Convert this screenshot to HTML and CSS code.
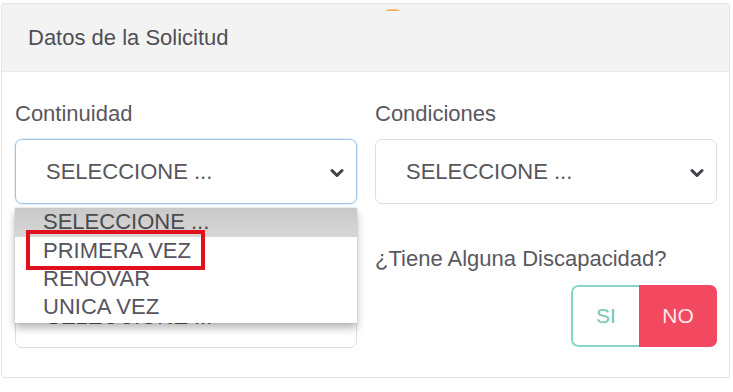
FILE: index.html
```html
<!DOCTYPE html>
<html lang="es">
<head>
<meta charset="utf-8">
<title>Datos de la Solicitud</title>
<link rel="stylesheet" href="styles.css">
</head>
<body>
<div class="page">
  <span class="orange-mark"></span>
  <section class="card">
    <header class="card-header">Datos de la Solicitud</header>
    <div class="card-body">
      <div class="field">
        <label class="label">Continuidad</label>
        <div class="select focused">
          <span>SELECCIONE ...</span>
          <svg class="chev" width="14" height="10" viewBox="0 0 14 10"><path d="M2 2.5 L7 7.5 L12 2.5" fill="none" stroke="#3f3f46" stroke-width="3" stroke-linecap="round" stroke-linejoin="round"/></svg>
        </div>
        <ul class="dropdown">
          <li class="opt active">SELECCIONE ...</li>
          <li class="opt">PRIMERA VEZ</li>
          <li class="opt">RENOVAR</li>
          <li class="opt">UNICA VEZ</li>
          <span class="highlight"></span>
        </ul>
      </div>
      <div class="field">
        <label class="label">Condiciones</label>
        <div class="select">
          <span>SELECCIONE ...</span>
          <svg class="chev" width="14" height="10" viewBox="0 0 14 10"><path d="M2 2.5 L7 7.5 L12 2.5" fill="none" stroke="#3f3f46" stroke-width="3" stroke-linecap="round" stroke-linejoin="round"/></svg>
        </div>
      </div>
      <div class="field">
        <span class="label blank"></span>
        <div class="select under">
          <span class="under-text">SELECCIONE ...</span>
        </div>
      </div>
      <div class="field">
        <label class="label">¿Tiene Alguna Discapacidad?</label>
        <div class="toggle-row">
          <div class="toggle">
            <span class="tg si">SI</span>
            <span class="tg no">NO</span>
          </div>
        </div>
      </div>
    </div>
  </section>
</div>
</body>
</html>
```

FILE: styles.css
```css
* { box-sizing: border-box; }
html, body { margin: 0; padding: 0; background: #fff; }
body {
  font-family: "Liberation Sans", Arial, sans-serif;
  font-size: 22px;
  color: #555;
}
.page {
  position: relative;
  width: 733px;
  height: 392px;
  padding: 3px 3px 0 1px;
}
.orange-mark {
  position: absolute;
  left: 386px;
  top: 9px;
  width: 14px;
  height: 4px;
  border-radius: 50% 50% 0 0;
  border-top: 2px solid #f2b35a;
}
.card {
  width: 729px;
  height: 375px;
  border: 1px solid #e4e4e4;
  border-radius: 3px;
  background: #fff;
  overflow: hidden;
}
.card-header {
  height: 68px;
  background: #f3f3f3;
  border-bottom: 1px solid #e9e9e9;
  padding: 19px 0 0 26px;
  line-height: 30px;
  color: #4f4f55;
}
.card-body {
  display: grid;
  grid-template-columns: 342px 342px;
  column-gap: 18px;
  row-gap: 38px;
  padding: 25px 13px 0 13px;
}
.field { position: relative; }
.label {
  display: block;
  line-height: 33px;
  color: #5b5760;
}
.label.blank { height: 33px; }
.select {
  margin-top: 9px;
  height: 65px;
  border: 1px solid #dedede;
  border-radius: 7px;
  display: flex;
  align-items: center;
  justify-content: space-between;
  padding: 0 12px 0 30px;
  color: #58565c;
}
.select.under { margin-top: 8px; }
.under-text { margin-top: 2px; }
.select.focused {
  border: 1.5px solid #9fc3e6;
  box-shadow: 0 0 0 1px rgba(159, 195, 230, 0.25);
}
.chev { display: block; margin-top: 2px; }
.dropdown {
  position: absolute;
  left: 0;
  top: 111px;
  width: 342px;
  margin: 0;
  padding: 0 0 2px 0;
  list-style: none;
  background: #fff;
  box-shadow: 0 5px 8px rgba(0, 0, 0, 0.28), 0 0 2px rgba(0, 0, 0, 0.15);
  z-index: 2;
}
.opt {
  height: 28px;
  line-height: 28px;
  padding-left: 28px;
  color: #56545c;
}
.opt.active {
  height: 29px;
  background: linear-gradient(#c9c9c9, #d6d6d6);
  color: #4a4a4f;
}
.highlight {
  position: absolute;
  left: 11px;
  top: 22px;
  width: 179px;
  height: 40px;
  border: 4px solid #e0111c;
}
.toggle-row {
  display: flex;
  justify-content: flex-end;
  margin-top: 10px;
}
.toggle {
  display: flex;
  height: 62px;
  border-radius: 7px;
  overflow: hidden;
}
.tg {
  display: flex;
  align-items: center;
  justify-content: center;
  font-size: 21px;
}
.si {
  width: 68px;
  border: 2px solid #86d6c9;
  border-right: none;
  border-radius: 7px 0 0 7px;
  color: #72c7b8;
  background: #fff;
}
.no {
  width: 78px;
  background: #f24860;
  color: #fde6ea;
}
```
